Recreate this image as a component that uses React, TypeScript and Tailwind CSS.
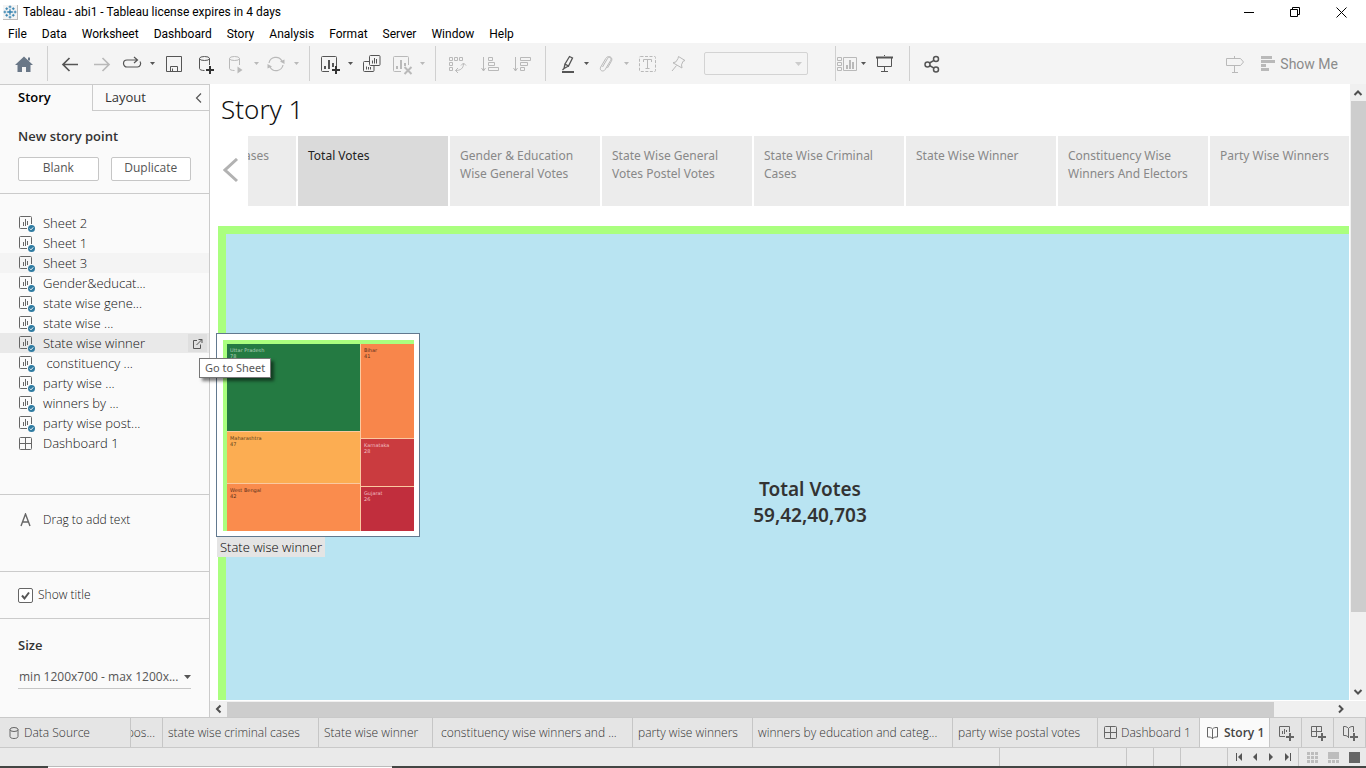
import React from "react";

type Tone = "dark" | "light";

const tones: Record<Tone, string> = { dark: "text-[#555555]", light: "text-[#b9b9b9]" };

function ToolButton({ label, tone = "dark", width = "w-8", children }: { label: string; tone?: Tone; width?: string; children: React.ReactNode }) {
  return (
    <button aria-label={label} className={`flex h-8 shrink-0 items-center justify-center ${width} ${tones[tone]}`}>
      <svg width="24" height="24" viewBox="0 0 24 24" fill="none" stroke="currentColor" className="shrink-0">
        {children}
      </svg>
    </button>
  );
}

function Caret({ label, tone = "dark" }: { label: string; tone?: Tone }) {
  return (
    <button aria-label={label} className={`flex h-8 w-3 shrink-0 items-center justify-center ${tones[tone]}`}>
      <svg width="5" height="3" viewBox="0 0 5 3" fill="currentColor">
        <path d="M0 0h5L2.5 3z" />
      </svg>
    </button>
  );
}

function Separator() {
  return <div className="my-[3px] w-px shrink-0 self-stretch bg-[#d0d0d0]" />;
}

function TableauLogo() {
  return (
    <svg width="15" height="15" viewBox="0 0 15 15" stroke="#2f7fae" fill="none" className="shrink-0 border-r border-b border-[#bbb] bg-[#f4f4f4]">
      <path d="M7.5 4.5v6M4.5 7.5h6" strokeWidth="1.4" />
      <path d="M7.5 .5v3M6 2h3M7.5 11.5v3M6 13h3M2 6v3M.5 7.500h3M13 6v3M11.500 7.500h3M4 2.500v3M2.500 4h3M11 2.500v3M9.500 4h3M4 9.500v3M2.500 11h3M11 9.500v3M9.500 11h3" />
    </svg>
  );
}

function SheetIcon() {
  return (
    <svg width="17" height="17" viewBox="0 0 17 17" fill="none" stroke="#666" className="shrink-0">
      <path d="M8 12.500H1.500a1 1 0 0 1-1-1V1.500a1 1 0 0 1 1-1H11.500a1 1 0 0 1 1 1V8" />
      <path d="M4.500 6v4M6.500 3v7M8.500 5v4" />
      <circle cx="12.500" cy="12.500" r="3.500" fill="#2f7ba1" stroke="none" />
      <path d="M10.800 12.600l1.200 1.200 2.200-2.400" stroke="#fff" />
    </svg>
  );
}

function DashboardIcon() {
  return (
    <svg width="13" height="13" viewBox="0 0 13 13" fill="none" stroke="#666" className="shrink-0">
      <rect x=".5" y=".5" width="12" height="12" rx="1" />
      <path d="M6.500 .5v12M.5 6.500h12" />
    </svg>
  );
}

function BookIcon() {
  return (
    <svg width="12" height="14" viewBox="0 0 12 14" fill="none" stroke="#666" className="shrink-0">
      <path d="M5.500 3.500v9.500M.5 1.500h1.500C4 1.500 5.500 2.500 5.500 3.500c0-1 1.500-2 3.500-2h1.500v9.500H9c-2 0-3.500 1-3.500 2 0-1-1.500-2-3.500-2H.5z" />
    </svg>
  );
}

const menus = ["File", "Data", "Worksheet", "Dashboard", "Story", "Analysis", "Format", "Server", "Window", "Help"];

const sheets = [
  "Sheet 2", "Sheet 1", "Sheet 3", "Gender&educat...", "state wise gene...", "state wise ...",
  "State wise winner", "\u00a0constituency ...", "party wise ...", "winners by ...", "party wise post...",
];

const points = [
  "Gender & Education Wise General Votes", "State Wise General Votes Postel Votes", "State Wise Criminal Cases",
  "State Wise Winner", "Constituency Wise Winners And Electors", "Party Wise Winners",
];

const tabs: { text: string; width: string }[] = [
  { text: "state wise criminal cases", width: "w-[156px] pl-[5px]" },
  { text: "State wise winner", width: "w-[114px] pl-[5px]" },
  { text: "constituency wise winners and ...", width: "w-[200px] pl-2" },
  { text: "party wise winners", width: "w-[120px] pl-[5px]" },
  { text: "winners by education and categ...", width: "w-[200px] pl-[5px]" },
  { text: "party wise postal votes", width: "w-[145px] pl-[5px]" },
];

function TitleBar() {
  return (
    <header className="flex h-6 shrink-0 items-center pl-[3px] font-[Roboto,'Noto_Sans',sans-serif] text-xs text-black">
      <TableauLogo />
      <h1 className="ml-[5px] flex-1 text-xs">Tableau - abi1 - Tableau license expires in 4 days</h1>
      <div className="flex h-5 pr-[2px]">
        <button aria-label="Minimize" className="flex w-[46px] items-center justify-center">
          <svg width="11" height="11" stroke="black"><path d="M0 5.500h10" /></svg>
        </button>
        <button aria-label="Restore" className="flex w-[46px] items-center justify-center">
          <svg width="11" height="11" fill="none" stroke="black"><path d="M.5 2.500h7v7h-7zM2.500 2.500v-2h7v7h-2" /></svg>
        </button>
        <button aria-label="Close" className="flex w-[46px] items-center justify-center">
          <svg width="11" height="11" stroke="black"><path d="M.5 .5l10 10M10.500 .5l-10 10" /></svg>
        </button>
      </div>
    </header>
  );
}

function Toolbar() {
  return (
    <div className="flex h-[41px] shrink-0 items-center bg-[#f4f4f4]">
      <ToolButton label="Home" width="w-[47px]">
        <path d="M12 4.500L21 13h-2.500v7H14v-5h-4v5H5.500v-7H3z" fill="#697787" stroke="none" />
        <path d="M16 5.500h2v3h-2z" fill="#697787" stroke="none" />
      </ToolButton>
      <Separator />
      <div className="flex px-[6px]">
        <ToolButton label="Undo"><path d="M20 12.500H5M11.500 6L5 12.500l6.500 6.500" strokeWidth="1.700" /></ToolButton>
        <ToolButton label="Redo" tone="light"><path d="M4 12.500h15M12.500 6l6.500 6.500-6.500 6.500" strokeWidth="1.700" /></ToolButton>
        <ToolButton label="Replay" width="w-7"><path d="M17 8H7a3.500 3.500 0 0 0 0 7h10.500a3.500 3.500 0 0 0 2.500-5.500M14 5l3.500 3-3.500 3" strokeWidth="1.200" /></ToolButton>
        <Caret label="Replay options" />
        <ToolButton label="Save"><path d="M4.500 4.500h15v15h-15zM8.500 19v-4.500h7V19M10.500 16.500v2.500" /></ToolButton>
        <ToolButton label="New data source">
          <ellipse cx="10.500" cy="6.500" rx="5" ry="2" />
          <path d="M5.500 6.500v10c0 1.200 2 2 5 2M15.500 6.500V13" />
          <path d="M16 14v8M12 18h8" stroke="#333" strokeWidth="2" />
        </ToolButton>
        <ToolButton label="Pause auto updates" tone="light" width="w-7">
          <ellipse cx="10.500" cy="6.500" rx="5" ry="2" />
          <path d="M5.500 6.500v10c0 1.200 2 2 5 2M15.500 6.500V13" />
          <path d="M13.500 14.500l5 3.500-5 3.500z" fill="currentColor" stroke="none" />
        </ToolButton>
        <Caret label="Auto update options" tone="light" />
        <ToolButton label="Refresh" tone="light" width="w-7">
          <path d="M5 11a7 7 0 0 1 13-2M19 13a7 7 0 0 1-13 2" strokeWidth="1.200" />
          <path d="M20.500 7.500v4.500l-4.500-2.500zM3.500 16.500V12l4.500 2.500z" fill="currentColor" stroke="none" />
        </ToolButton>
        <Caret label="Refresh options" tone="light" />
      </div>
      <div className="w-px" />
      <Separator />
      <div className="flex pr-[7px] pl-[6px]">
        <ToolButton label="New worksheet" width="w-7">
          <path d="M11 19.500H4.500a1 1 0 0 1-1-1v-13a1 1 0 0 1 1-1h13a1 1 0 0 1 1 1V15" />
          <path d="M7 14v3M11 8v9M15 11v4" strokeWidth="2" />
          <path d="M18 14v8M14 18h8" stroke="#333" strokeWidth="2" />
        </ToolButton>
        <Caret label="New worksheet options" />
        <ToolButton label="Duplicate">
          <path d="M14 13.500h5a1 1 0 0 0 1-1v-8a1 1 0 0 0-1-1h-8.500a1 1 0 0 0-1 1v8a1 1 0 0 0 1 1H14M9 9.500H4.500a1 1 0 0 0-1 1v8a1 1 0 0 0 1 1h8.500a1 1 0 0 0 1-1v-5M12.500 8.500v3M14.500 6v5.500M16.500 7v4.500M6.500 14.500v3M8.500 15v2.500M10.500 15v2.500" />
        </ToolButton>
        <ToolButton label="Clear sheet" tone="light" width="w-7">
          <path d="M11 19.500H4.500a1 1 0 0 1-1-1v-13a1 1 0 0 1 1-1h13a1 1 0 0 1 1 1V13" />
          <path d="M7 14v3M11 8v9M15 11v3" strokeWidth="2" />
          <path d="M14.500 15l7 7M21.500 15l-7 7" strokeWidth="2" />
        </ToolButton>
        <Caret label="Clear options" tone="light" />
      </div>
      <Separator />
      <div className="flex pr-[7px] pl-[6px]">
        <ToolButton label="Swap rows and columns" tone="light">
          <path d="M3.500 5.500h3v3h-3zM8.500 5.500h3v3h-3zM13.500 5.500h3v3h-3zM3.500 10.500h3v3h-3zM3.500 15.500h3v3h-3zM9.500 18.500c5 0 8-2 8-7M12 16l-2.500 2.500L12 21M15 13.500l2.500-2.500 2.500 2.500" />
        </ToolButton>
        <ToolButton label="Sort ascending" tone="light">
          <path d="M5.500 5v14M3.500 16l2 3 2-3M10.500 5.500h4v3h-4zM10.500 10.500h6v3h-6zM10.500 15.500h10v3h-10z" />
        </ToolButton>
        <ToolButton label="Sort descending" tone="light">
          <path d="M5.500 5v14M3.500 16l2 3 2-3M10.500 5.500h10v3h-10zM10.500 10.500h7v3h-7zM10.500 15.500h4v3h-4z" />
        </ToolButton>
      </div>
      <Separator />
      <div className="flex items-center pr-[27px] pl-[10px]">
        <ToolButton label="Highlight" width="w-6">
          <path d="M9 12l4.500-7.500 3 1.500L12.500 14zM9 12l-1 4.500 4.500-2.500M8 16.500L6.500 18" strokeWidth="1.300" />
          <path d="M6 20h12" strokeWidth="2" />
        </ToolButton>
        <Caret label="Highlight options" />
        <ToolButton label="Group members" tone="light" width="w-7">
          <path d="M8.500 15l5-8.500c1.500-2.200 4.500-.8 3.200 1.800l-5.500 9.200c-2 3-6.200 1-4.500-2.400l5-8.500c2.200-4 8-1.600 5.600 2.800l-3.800 6.500" />
        </ToolButton>
        <Caret label="Group options" tone="light" />
        <ToolButton label="Show mark labels" tone="light">
          <rect x="3.500" y="4.500" width="16" height="15" rx="1" strokeDasharray="3 1.500" />
          <path d="M7.500 10V7.500h8V10M11.500 7.500v9M9.500 16.500h4" />
        </ToolButton>
        <ToolButton label="Pin" tone="light" width="w-7">
          <path d="M12.500 4.500l6.500 4-2 .8-1.500 3.500.5 3.200-9-5.200 3-1 2-3.300zM10.500 13.500L6 19" />
        </ToolButton>
        <div className="relative ml-3 flex items-center">
          <select aria-label="Fit" className="h-[23px] w-[104px] appearance-none rounded-[2px] border border-[#d3d3d3] bg-[#f4f4f4]" defaultValue="">
            <option value=""></option>
          </select>
          <svg width="7" height="4" viewBox="0 0 7 4" className="pointer-events-none absolute right-[6px]" fill="#cccccc"><path d="M0 0h7L3.500 4z" /></svg>
        </div>
      </div>
      <Separator />
      <div className="flex pr-[7px]">
        <ToolButton label="Show cards" tone="light" width="w-[21px]">
          <path d="M2.500 5.500h4v3h-4zM2.500 10.500h4v3h-4zM2.500 15.500h4v3h-4zM8.500 5.500h13v13h-13z" />
          <path d="M12 13v4M15 8v9M18 10v7" strokeWidth="2" />
        </ToolButton>
        <Caret label="Card options" />
        <ToolButton label="Presentation mode">
          <path d="M3 5.500h17" strokeWidth="2" />
          <path d="M4.500 6v8.500h14V6M11.500 4V3M11.500 14.500v5M8 19.500h7" />
        </ToolButton>
      </div>
      <div className="w-px" />
      <Separator />
      <div className="flex flex-1 pl-[6px]">
        <ToolButton label="Share">
          <g strokeWidth="1.500">
            <circle cx="7.500" cy="12.500" r="2.500" /><circle cx="16" cy="7" r="2.500" /><circle cx="16" cy="17.500" r="2.500" />
            <path d="M9.500 11l4.500-2.700M9.500 13.500l4.500 2.700" />
          </g>
        </ToolButton>
      </div>
      <ToolButton label="Guide" tone="light">
        <path d="M3.500 6.500h14l3 3.500-3 3.500h-14zM11.500 4v2M11.500 14v7M9 20.500h6" />
      </ToolButton>
      <button className="mr-[28px] ml-[10px] flex items-center gap-[5px] font-[Roboto,sans-serif] text-sm text-[#8b8b8b]">
        <svg width="14" height="15" viewBox="0 0 14 15" fill="#b9b9b9"><path d="M0 0h11v3H0zM0 4h14v3H0zM0 8h5v3H0zM0 12h8v3H0z" /></svg>
        <span>Show Me</span>
      </button>
    </div>
  );
}

function Sidebar() {
  return (
    <aside className="flex w-[210px] shrink-0 flex-col border-t border-r border-[#cbcbcb] bg-[#fafafa] text-[13px] text-[#333]">
      <div className="flex h-[26px] shrink-0 text-black">
        <button className="w-[92px] pl-[18px] text-left font-semibold">Story</button>
        <div className="flex flex-1 items-center border-b border-l border-[#cbcbcb] pr-[6px] pl-3">
          <button className="flex-1 text-left text-[#333]">Layout</button>
          <button aria-label="Collapse pane">
            <svg width="8" height="10" fill="none" stroke="#555" strokeWidth="1.200"><path d="M6 .5L1.500 5 6 9.500" /></svg>
          </button>
        </div>
      </div>
      <section className="h-[83px] shrink-0 border-b border-[#cbcbcb] pt-[15px] pl-[18px]">
        <h2 className="leading-5 font-semibold text-[#333]">New story point</h2>
        <div className="flex gap-3 pt-[11px] pr-[18px] text-xs text-[#555]">
          <button className="h-6 flex-1 rounded-[2px] border border-[#c6c6c6] bg-white pb-[2px]">Blank</button>
          <button className="h-6 flex-1 rounded-[2px] border border-[#c6c6c6] bg-white pb-[2px]">Duplicate</button>
        </div>
      </section>
      <ul className="h-[301px] shrink-0 border-b border-[#cbcbcb] pt-[19px] leading-5 font-light text-[#111]">
        {sheets.map((s) => (
          <li key={s} className={`flex h-5 items-end pl-[19px] ${s === "State wise winner" ? "bg-[#e9e9e9]" : s === "Sheet 3" ? "bg-[#f4f4f4]" : ""}`}>
            <SheetIcon />
            <span className="ml-[7px] flex-1 whitespace-nowrap">{s}</span>
            {s === "State wise winner" && (
              <button aria-label="Go to Sheet" className="mr-[2px] flex h-[18px] w-[19px] items-center justify-center self-center bg-[#dfdfdf]">
                <svg width="11" height="11" fill="none" stroke="#555"><path d="M5 2.500H1.500v8h7V6.500M4.500 7L10 1.500M6.500 1.500h3.500V5" /></svg>
              </button>
            )}
          </li>
        ))}
        <li className="flex h-5 items-center pl-[19px]">
          <DashboardIcon />
          <span className="ml-[11px]">Dashboard 1</span>
        </li>
      </ul>
      <div className="flex h-[77px] shrink-0 items-start border-b border-[#cbcbcb] pt-[15px] pl-5 text-xs leading-5 font-light text-[#111]">
        <svg width="11" height="14" viewBox="0 0 11 14" fill="none" stroke="#666" strokeWidth="1.400" className="mt-[3px]"><path d="M1 13L5.500 1 10 13M2.500 9h6" /></svg>
        <span className="ml-3">Drag to add text</span>
      </div>
      <label className="flex h-[47px] shrink-0 items-center border-b border-[#cbcbcb] pl-[18px] text-xs font-light text-[#111]">
        <span className="relative flex">
          <input type="checkbox" defaultChecked className="size-[15px] appearance-none rounded-[2px] border border-[#666] bg-white" />
          <svg width="15" height="15" fill="none" stroke="#555" strokeWidth="2" className="pointer-events-none absolute inset-0"><path d="M4 7.500l2.500 3 4.500-6" /></svg>
        </span>
        <span className="ml-[5px]">Show title</span>
      </label>
      <section className="pt-4 pr-[18px] pl-[18px]">
        <h2 className="leading-5 font-semibold text-[#333]">Size</h2>
        <div className="relative mt-[10px] flex items-center">
          <select aria-label="Story size" className="h-6 w-full appearance-none border-b border-[#c6c6c6] pl-px text-xs text-[#555]">
            <option>min 1200x700 - max 1200x...</option>
          </select>
          <svg width="7" height="4" fill="#555" className="pointer-events-none absolute right-0"><path d="M0 0h7L3.500 4z" /></svg>
        </div>
      </section>
    </aside>
  );
}

function Cell({ name, value, className }: { name: string; value: number; className: string }) {
  return (
    <div className={`pt-[3px] pl-[3px] text-[5px] leading-[6px] ${className}`}>
      <div>{name}</div>
      <div>{value}</div>
    </div>
  );
}

function SheetPreview() {
  return (
    <div className="absolute top-[333px] left-[216px]">
      <div className="flex size-[204px] border border-[#62798f] bg-white p-[6px] pr-[5px] pb-[5px]">
        <div className="flex flex-1 gap-px border-t-4 border-l-4 border-[#aaff7f] bg-[#fbc9a0] font-['DejaVu_Sans',sans-serif]">
          <div className="flex w-[133px] flex-col gap-px">
            <Cell name="Uttar Pradesh" value={78} className="h-[87px] bg-[#247a42] text-[#b5d3bf]" />
            <Cell name="Maharashtra" value={47} className="h-[51px] bg-[#fcad52] text-[#5c3d1c]" />
            <Cell name="West Bengal" value={42} className="flex-1 bg-[#fa8c4d] text-[#5c2f1c]" />
          </div>
          <div className="flex flex-1 flex-col gap-px">
            <Cell name="Bihar" value={41} className="h-[94px] bg-[#f8864b] text-[#5c2f1c]" />
            <Cell name="Karnataka" value={28} className="h-[47px] bg-[#ca3b3f] text-[#f0bfc0]" />
            <Cell name="Gujarat" value={26} className="flex-1 bg-[#c12e3d] text-[#f0bfc0]" />
          </div>
        </div>
      </div>
      <div className="ml-px w-fit bg-[#e4e4e4] px-[3px] text-[13px] leading-5 font-light text-black">State wise winner</div>
    </div>
  );
}

function Chevron({ d }: { d: string }) {
  return <svg width="10" height="10" fill="none" stroke="#505050" strokeWidth="2"><path d={d} /></svg>;
}

function StoryView() {
  return (
    <main className="flex min-w-0 flex-1 flex-col">
      <div className="flex min-h-0 flex-1">
        <div className="flex min-w-0 flex-1 flex-col overflow-hidden bg-white pl-2 font-['Noto_Sans',sans-serif]">
          <h2 className="h-[52px] shrink-0 pt-[9px] pl-[3px] text-[26px] leading-8 font-light text-[#111]">Story 1</h2>
          <nav aria-label="Story points" className="flex h-[70px] shrink-0 text-xs leading-[18px] text-[#888]">
            <button aria-label="Previous story points" className="w-[30px] shrink-0 pl-[5px]">
              <svg width="16" height="26" fill="none" stroke="#b2b2b2" strokeWidth="3"><path d="M14 1L2 12l12 11" /></svg>
            </button>
            <div className="flex min-w-0 flex-1 gap-[2px] overflow-hidden">
              <button className="flex w-12 shrink-0 justify-end overflow-hidden bg-[#ececec] pt-[11px] pr-[27px]"><span className="min-w-0 overflow-hidden"><span className="flex justify-end">Cases</span></span></button>
              <button className="flex w-[150px] shrink-0 bg-[#dadada] px-[10px] pt-[11px] text-left text-[#222]">Total Votes</button>
              {points.map((p) => (
                <button key={p} className="flex w-[150px] shrink-0 bg-[#ececec] px-[10px] pt-[11px] text-left">{p}</button>
              ))}
            </div>
          </nav>
          <div className="mt-5 flex h-[552px] w-[1184px] shrink-0 flex-col items-center justify-center border-8 border-[#aaff7f] bg-[#b9e4f2] text-[19px] leading-[26px] font-semibold text-[#333]">
            <p>Total Votes</p>
            <p>59,42,40,703</p>
          </div>
        </div>
        <div className="flex w-[17px] shrink-0 flex-col items-center border-l border-white bg-[#f0f0f0]">
          <button aria-label="Scroll up" className="flex h-[17px] items-center"><Chevron d="M1.500 7L5 3.500 8.500 7" /></button>
          <div className="h-[511px] w-[15px] bg-[#cdcdcd]" />
          <div className="flex-1" />
          <button aria-label="Scroll down" className="flex h-[17px] items-center"><Chevron d="M1.500 3L5 6.500 8.500 3" /></button>
        </div>
      </div>
      <div className="flex h-[17px] shrink-0 items-center border-t border-white bg-[#f0f0f0] pr-[17px]">
        <button aria-label="Scroll left" className="flex w-[17px] justify-center"><Chevron d="M6.500 1.500L3 5l3.500 3.500" /></button>
        <div className="h-[15px] w-[1047px] bg-[#cdcdcd]" />
        <div className="flex-1" />
        <button aria-label="Scroll right" className="flex w-[17px] justify-center"><Chevron d="M3 1.500L6.500 5 3 8.500" /></button>
      </div>
    </main>
  );
}

const tabCell = "flex shrink-0 items-center border-r border-[#c6c6c6] whitespace-nowrap";

function SheetTabs() {
  return (
    <nav aria-label="Sheets" className="flex h-[31px] shrink-0 overflow-hidden border-y border-[#c9c9c9] bg-[#e5e5e5] text-xs font-light text-[#333]">
      <button className={`${tabCell} w-[131px] gap-[5px] pl-[9px]`}>
        <svg width="10" height="12" fill="none" stroke="#666"><ellipse cx="5" cy="2.500" rx="4" ry="2" /><path d="M1 2.500v7c0 1.200 1.600 2 4 2s4-.8 4-2v-7" /></svg>
        Data Source
      </button>
      <button className={`${tabCell} w-8 justify-end overflow-hidden pr-[7px]`}>
        <span className="flex min-w-0 justify-end overflow-hidden">pos...</span>
      </button>
      {tabs.map((t) => <button key={t.text} className={`${tabCell} ${t.width}`}>{t.text}</button>)}
      <button className={`${tabCell} w-[102px] gap-1 pl-[6px]`}><DashboardIcon />Dashboard 1</button>
      <button className={`${tabCell} w-[70px] gap-[5px] bg-[#fafafa] pl-[7px] font-semibold text-[#444]`}><BookIcon />Story 1</button>
      <button aria-label="New worksheet" className={`${tabCell} w-8 justify-center`}>
        <svg width="16" height="16" fill="none" stroke="#666"><path d="M7 11.500H1.500V1.500h10V7M4.500 6v3M6.500 4v5M8.500 5v2" /><path d="M12 8v8M8 12h8" strokeWidth="2" /></svg>
      </button>
      <button aria-label="New dashboard" className={`${tabCell} w-8 justify-center`}>
        <svg width="16" height="16" fill="none" stroke="#666"><path d="M7 11.500H1.500V1.500h10V7M6.500 1.500v10M1.500 6.500h10" /><path d="M12 8v8M8 12h8" strokeWidth="2" /></svg>
      </button>
      <button aria-label="New story" className={`${tabCell} w-8 justify-center`}>
        <svg width="16" height="16" fill="none" stroke="#666"><path d="M6.500 13V3.500C6 2.500 4 1.500 3 1.500H1.500v9H3c1.500 0 3 1 3.500 2M6.500 3.500C7 2.500 9 1.500 10 1.500h1.500V7" /><path d="M12 8v8M8 12h8" strokeWidth="2" /></svg>
      </button>
    </nav>
  );
}

function StatusBar() {
  const cell = "shrink-0 border-l border-[#c6c6c6]";
  const nav = "flex w-4 items-center justify-center";
  return (
    <footer className="shrink-0 bg-[#eaeaea]">
      <div className="flex h-[18px] justify-end">
        <div className={`${cell} w-[127px]`} />
        <div className={`${cell} w-[27px]`} />
        <div className={`${cell} w-[27px]`} />
        <div className={`${cell} w-[47px]`} />
        <div className={`${cell} flex w-[71px] pl-[3px]`}>
          <button aria-label="First sheet" className={nav}><svg width="7" height="8" fill="#555"><path d="M0 0h1v8H0zM6 0v8L2 4z" /></svg></button>
          <button aria-label="Previous sheet" className={nav}><svg width="4" height="8" fill="#555"><path d="M4 0v8L0 4z" /></svg></button>
          <button aria-label="Next sheet" className={nav}><svg width="4" height="8" fill="#555"><path d="M0 0v8l4-4z" /></svg></button>
          <button aria-label="Last sheet" className={nav}><svg width="7" height="8" fill="#555"><path d="M6 0h1v8H6zM1 0v8l4-4z" /></svg></button>
        </div>
        <div className={`${cell} flex w-[68px] items-center gap-[10px] pl-2`}>
          <button aria-label="Sheet sorter"><svg width="11" height="11" fill="#bdbdbd"><path d="M0 0h3v3H0zM4 0h3v3H4zM8 0h3v3H8zM0 4h3v3H0zM4 4h3v3H4zM8 4h3v3H8zM0 8h3v3H0zM4 8h3v3H4zM8 8h3v3H8z" /></svg></button>
          <button aria-label="Filmstrip"><svg width="11" height="11" fill="#bdbdbd"><path d="M0 0h11v7H0zM0 8h3v3H0zM4 8h3v3H4zM8 8h3v3H8z" /></svg></button>
          <button aria-label="Tabs"><svg width="11" height="11" fill="#666"><path d="M0 0h11v11H0z" /></svg></button>
        </div>
      </div>
      <div className="flex h-[2px]">
        <div className="w-12 bg-[#444644]" />
        <div className="w-[344px] border-t border-[#bbb] bg-white" />
        <div className="flex-1 bg-[#444644]" />
      </div>
    </footer>
  );
}

export default function App() {
  return (
    <div className="relative flex h-screen flex-col overflow-hidden bg-white font-['Open_Sans',sans-serif]">
      <TitleBar />
      <nav aria-label="Application" className="flex h-[19px] shrink-0 items-center gap-[15px] pl-2 font-[Roboto,'Noto_Sans',sans-serif] text-xs text-black">
        {menus.map((m) => <button key={m}>{m}</button>)}
      </nav>
      <Toolbar />
      <div className="flex min-h-0 flex-1">
        <Sidebar />
        <StoryView />
      </div>
      <SheetTabs />
      <StatusBar />
      <SheetPreview />
      <div role="tooltip" className="absolute top-[358px] left-[199px] border border-[#767676] bg-white px-[5px] font-['Noto_Sans',sans-serif] text-[11px] leading-[18px] text-[#575757] shadow-[3px_3px_3px_rgba(0,0,0,0.5)]">Go to Sheet</div>
    </div>
  );
}
